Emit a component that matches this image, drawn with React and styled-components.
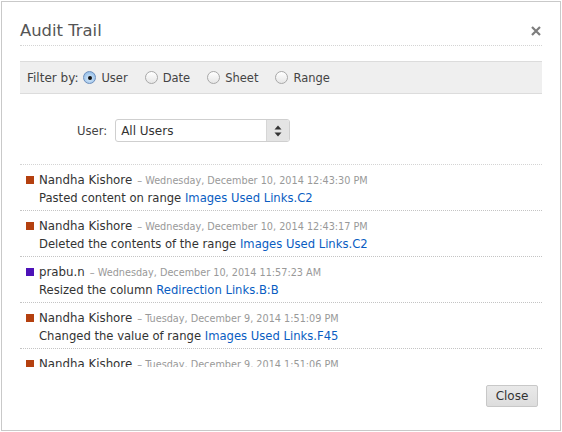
import React from 'react'
import styled, { createGlobalStyle } from 'styled-components'

const GlobalStyle = createGlobalStyle`
  html, body {
    margin: 0;
    padding: 0;
    background: #fff;
  }
  body {
    font-family: "DejaVu Sans", "Liberation Sans", sans-serif;
    color: #333;
  }
`

const entries = [
  { name: 'Nandha Kishore', color: '#b4400f', date: 'Wednesday, December 10, 2014 12:43:30 PM', text: 'Pasted content on range', link: 'Images Used Links.C2' },
  { name: 'Nandha Kishore', color: '#b4400f', date: 'Wednesday, December 10, 2014 12:43:17 PM', text: 'Deleted the contents of the range', link: 'Images Used Links.C2' },
  { name: 'prabu.n', color: '#4d12b8', date: 'Wednesday, December 10, 2014 11:57:23 AM', text: 'Resized the column', link: 'Redirection Links.B:B' },
  { name: 'Nandha Kishore', color: '#b4400f', date: 'Tuesday, December 9, 2014 1:51:09 PM', text: 'Changed the value of range', link: 'Images Used Links.F45' },
  { name: 'Nandha Kishore', color: '#b4400f', date: 'Tuesday, December 9, 2014 1:51:06 PM', text: 'Changed the value of range', link: 'Images Used Links.F45' },
]

const filters = ['User', 'Date', 'Sheet', 'Range']

function CloseIcon() {
  return (
    <svg width="10" height="10" viewBox="0 0 10 10">
      <path d="M1 1 L9 9 M9 1 L1 9" stroke="#7d7d7d" strokeWidth="2.2" strokeLinecap="butt" />
    </svg>
  )
}

function SelectArrows() {
  return (
    <svg width="8" height="12" viewBox="0 0 8 12">
      <path d="M4 0.5 L7.5 4.5 L0.5 4.5 Z" fill="#333" />
      <path d="M4 11.5 L7.5 7.5 L0.5 7.5 Z" fill="#333" />
    </svg>
  )
}

function App() {
  return (
    <>
      <GlobalStyle />
      <Dialog>
        <Header>
          <Title>Audit Trail</Title>
          <CloseX><CloseIcon /></CloseX>
        </Header>

        <FilterBar>
          <FilterLabel>Filter by:</FilterLabel>
          {filters.map((f, i) => (
            <Option key={f}>
              <Radio $checked={i === 0} />
              <span>{f}</span>
            </Option>
          ))}
        </FilterBar>

        <UserRow>
          <UserLabel>User:</UserLabel>
          <Select>
            <SelectValue>All Users</SelectValue>
            <SelectButton><SelectArrows /></SelectButton>
          </Select>
        </UserRow>

        <List>
          {entries.map((e, i) => (
            <Entry key={i}>
              <EntryHead>
                <Marker $color={e.color} />
                <Name>{e.name}</Name>
                <When>– {e.date}</When>
              </EntryHead>
              <Desc>
                {e.text} <Link>{e.link}</Link>
              </Desc>
            </Entry>
          ))}
        </List>

        <Footer>
          <Button>Close</Button>
        </Footer>
      </Dialog>
    </>
  )
}

export default App

const Dialog = styled.div`
  box-sizing: border-box;
  margin: 1px;
  width: 560px;
  height: 430px;
  border: 1px solid #c9c9c9;
  padding: 0 18px;
  background: #fff;
  display: flex;
  flex-direction: column;
`

const Header = styled.div`
  display: flex;
  justify-content: space-between;
  align-items: center;
  padding: 19px 0 4px 0;
  border-bottom: 1px dotted #d4d4d4;
`

const Title = styled.div`
  font-size: 16.4px;
  line-height: 20px;
  color: #555;
`

const CloseX = styled.div`
  display: flex;
  align-items: center;
  padding-right: 1px;
  cursor: pointer;
`

const FilterBar = styled.div`
  margin-top: 15px;
  height: 31px;
  background: #efefef;
  border-top: 1px solid #dcdcdc;
  border-bottom: 1px solid #dcdcdc;
  display: flex;
  align-items: center;
  padding-left: 7px;
  font-size: 12px;
  color: #444;
`

const FilterLabel = styled.span`
  margin-right: 5px;
`

const Option = styled.label`
  display: flex;
  align-items: center;
  gap: 5px;
  margin-right: 17px;
  font-size: 11.5px;
`

const Radio = styled.span`
  box-sizing: border-box;
  width: 13px;
  height: 13px;
  border-radius: 50%;
  border: 1px solid ${p => (p.$checked ? '#6d8fbd' : '#a8a8a8')};
  background: ${p =>
    p.$checked
      ? 'radial-gradient(circle at 50% 60%, #d9eaf9 0%, #9cc3ea 70%, #7fabdc 100%)'
      : 'linear-gradient(#ffffff, #e6e6e6)'};
  display: flex;
  align-items: center;
  justify-content: center;

  &::after {
    content: '';
    display: ${p => (p.$checked ? 'block' : 'none')};
    width: 4px;
    height: 4px;
    border-radius: 50%;
    background: #111;
  }
`

const UserRow = styled.div`
  display: flex;
  align-items: center;
  gap: 8px;
  margin-top: 25px;
  padding-left: 57px;
  font-size: 11.6px;
  color: #444;
`

const UserLabel = styled.span``

const Select = styled.div`
  box-sizing: border-box;
  width: 175px;
  height: 23px;
  display: flex;
  border: 1px solid #cfcfcf;
  border-radius: 3px;
  background: #fff;
  overflow: hidden;
`

const SelectValue = styled.div`
  flex: 1;
  display: flex;
  align-items: center;
  padding-left: 5px;
  font-size: 12px;
  color: #333;
`

const SelectButton = styled.div`
  width: 22px;
  background: #e4e4e4;
  border-left: 1px solid #d6d6d6;
  display: flex;
  align-items: center;
  justify-content: center;
`

const List = styled.div`
  margin-top: 22px;
  height: 202px;
  overflow: hidden;
  border-top: 1px dotted #d4d4d4;
`

const Entry = styled.div`
  padding: 6px 0 3px 6px;
  border-bottom: 1px dotted #c4c4c4;
`

const EntryHead = styled.div`
  display: flex;
  align-items: center;
  height: 18px;
  white-space: nowrap;
`

const Marker = styled.span`
  width: 8px;
  height: 8px;
  background: ${p => p.$color};
  margin-right: 5px;
`

const Name = styled.span`
  font-size: 11.8px;
  color: #333;
  margin-right: 5px;
`

const When = styled.span`
  font-size: 9.7px;
  color: #999;
`

const Desc = styled.div`
  margin-left: 13px;
  height: 18px;
  line-height: 18px;
  font-size: 11.6px;
  color: #333;
  white-space: nowrap;
`

const Link = styled.a`
  color: #0a5dc2;
  text-decoration: none;
  cursor: pointer;
`

const Footer = styled.div`
  display: flex;
  justify-content: flex-end;
  margin-top: 18px;
  padding-right: 4px;
`

const Button = styled.button`
  box-sizing: border-box;
  width: 52px;
  height: 22px;
  padding: 0;
  border: 1px solid #c8c8c8;
  border-radius: 2px;
  background: linear-gradient(#e9e9e9, #dddddd);
  font-family: "DejaVu Sans", "Liberation Sans", sans-serif;
  font-size: 12px;
  color: #333;
  cursor: pointer;
`
